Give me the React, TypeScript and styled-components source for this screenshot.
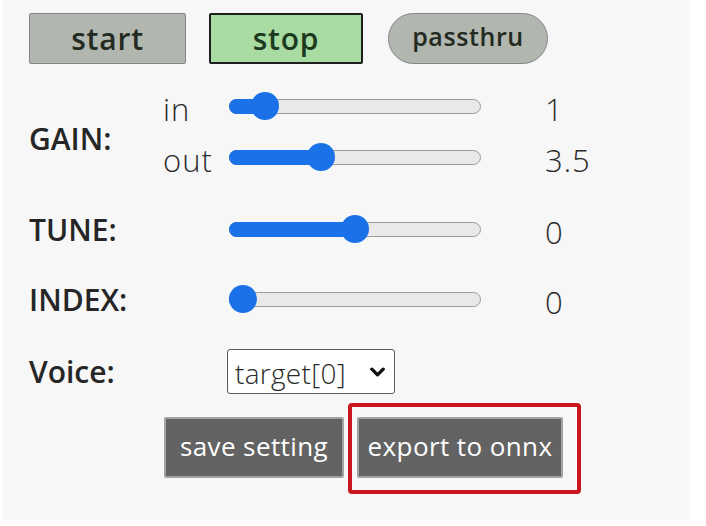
import React from 'react';
import styled, { createGlobalStyle } from 'styled-components';

const Global = createGlobalStyle`
  html, body { margin: 0; padding: 0; background: #ffffff; }
  body { font-family: "Open Sans", "Liberation Sans", sans-serif; }
`;

const Panel = styled.div`
  margin: 0 16px 0 2px;
  height: 520px;
  background: #f7f7f7;
  padding: 13px 0 0 27px;
  box-sizing: border-box;
  color: #222;
`;

const TopBar = styled.div`
  display: flex;
  align-items: flex-start;
`;

type Variant = 'idle' | 'active' | 'pill';

const ToggleButton = styled.button<{ $variant: Variant; $w: number; $ml: number }>`
  width: ${(p) => p.$w}px;
  height: 51px;
  margin-left: ${(p) => p.$ml}px;
  box-sizing: border-box;
  padding: 0;
  font-family: inherit;
  font-weight: 600;
  font-size: ${(p) => (p.$variant === 'pill' ? 25 : 30)}px;
  letter-spacing: ${(p) => (p.$variant === 'pill' ? 0.6 : 0.8)}px;
  color: ${(p) => (p.$variant === 'active' ? '#1d3a1f' : '#222a22')};
  display: flex;
  align-items: center;
  justify-content: center;
  background: ${(p) => (p.$variant === 'active' ? '#a9dca2' : '#b1b6ae')};
  border: ${(p) => (p.$variant === 'active' ? '2px solid #1e1e1e' : '1px solid #858585')};
  border-radius: ${(p) => (p.$variant === 'pill' ? '26px' : '2px')};
  padding-bottom: ${(p) => (p.$variant === 'pill' ? '6px' : '0')};
`;

const Form = styled.div`
  margin-top: 16px;
  display: flex;
  flex-direction: column;
`;

const Row = styled.div<{ $h: number; $mt?: number; $pt?: number }>`
  display: flex;
  align-items: center;
  height: ${(p) => p.$h}px;
  margin-top: ${(p) => p.$mt ?? 0}px;
  padding-top: ${(p) => p.$pt ?? 0}px;
  box-sizing: border-box;
`;

const GainGroup = styled.div`
  display: flex;
  height: 102px;
`;

const SubRows = styled.div`
  display: flex;
  flex-direction: column;
`;

const Label = styled.div<{ $w: number; $pt?: number }>`
  width: ${(p) => p.$w}px;
  flex: none;
  font-weight: 600;
  font-size: 30px;
  color: #262626;
  align-self: center;
  padding-top: ${(p) => p.$pt ?? 0}px;
`;

const SubLabel = styled.div`
  width: 66px;
  margin-left: -2px;
  font-weight: 300;
  font-size: 31px;
  letter-spacing: 1px;
  color: #2a2a2a;
  padding-top: 6px;
`;

const Value = styled.div`
  margin-left: 64px;
  font-weight: 300;
  font-size: 31px;
  letter-spacing: 1px;
  color: #2a2a2a;
  padding-top: 6px;
`;

const Track = styled.div`
  position: relative;
  flex: none;
  width: 252px;
  height: 15px;
  box-sizing: border-box;
  border: 1px solid #9c9c9c;
  border-radius: 8px;
  background: #e9e9e9;
`;

const Fill = styled.div`
  position: absolute;
  left: -1px;
  top: -1px;
  bottom: -1px;
  border-radius: 8px;
  background: #1b72e8;
`;

const Thumb = styled.div`
  position: absolute;
  top: 50%;
  width: 28px;
  height: 28px;
  margin: -14px 0 0 -14px;
  border-radius: 50%;
  background: #1b72e8;
`;

function Slider({ min, max, value }: { min: number; max: number; value: number }) {
  const frac = (value - min) / (max - min);
  const pos = 14 + frac * 224;
  return (
    <Track>
      <Fill style={{ width: pos + 1 }} />
      <Thumb style={{ left: pos - 1 }} />
    </Track>
  );
}

const SelectBox = styled.div`
  display: flex;
  align-items: center;
  gap: 24px;
  height: 45px;
  width: 168px;
  margin-left: -2px;
  box-sizing: border-box;
  padding: 0 9px 0 7px;
  border: 1px solid #5a5a5a;
  border-radius: 3px;
  background: #ffffff;
  font-weight: 300;
  font-size: 28px;
  letter-spacing: 0.3px;
  color: #2a2a2a;
`;

const SelectText = styled.span`
  padding-top: 2px;
`;

const BottomRow = styled.div`
  display: flex;
  align-items: flex-start;
  margin-left: 135px;
`;

const ActionButton = styled.button<{ $w: number; $mt?: number }>`
  width: ${(p) => p.$w}px;
  height: 61px;
  margin-top: ${(p) => p.$mt ?? 0}px;
  box-sizing: border-box;
  background: #636363;
  border: 2px solid #a3a3a3;
  border-radius: 2px;
  color: #ffffff;
  font-family: inherit;
  font-weight: 500;
  font-size: 26px;
  letter-spacing: 0.4px;
  padding: 0 0 3px;
  white-space: nowrap;
`;

const Highlight = styled.div`
  margin-left: 4px;
  padding: 10px 14px 12px 5px;
  border: 4px solid #c8161d;
  border-radius: 4px;
`;

export default function App() {
  return (
    <>
      <Global />
      <Panel>
        <TopBar>
          <ToggleButton $variant="idle" $w={157} $ml={0}>start</ToggleButton>
          <ToggleButton $variant="active" $w={154} $ml={23}>stop</ToggleButton>
          <ToggleButton $variant="pill" $w={160} $ml={25}>passthru</ToggleButton>
        </TopBar>
        <Form>
          <GainGroup>
            <Label $w={136} $pt={14}>GAIN:</Label>
            <SubRows>
              <Row $h={52}>
                <SubLabel>in</SubLabel>
                <Slider min={0} max={10} value={1} />
                <Value>1</Value>
              </Row>
              <Row $h={50}>
                <SubLabel>out</SubLabel>
                <Slider min={0} max={10} value={3.5} />
                <Value>3.5</Value>
              </Row>
            </SubRows>
          </GainGroup>
          <Row $h={70} $mt={12}>
            <Label $w={200}>TUNE:</Label>
            <Slider min={-20} max={20} value={0} />
            <Value>0</Value>
          </Row>
          <Row $h={70}>
            <Label $w={200}>INDEX:</Label>
            <Slider min={0} max={1} value={0} />
            <Value>0</Value>
          </Row>
          <Row $h={69} $pt={6}>
            <Label $w={200}>Voice:</Label>
            <SelectBox>
              <SelectText>target[0]</SelectText>
              <svg width="16" height="12" viewBox="0 0 16 12" fill="none">
                <path d="M2 3 L8 9 L14 3" stroke="#111" strokeWidth="3.6" strokeLinecap="round" strokeLinejoin="round" />
              </svg>
            </SelectBox>
          </Row>
          <BottomRow>
            <ActionButton $w={180} $mt={14}>save setting</ActionButton>
            <Highlight>
              <ActionButton $w={206}>export to onnx</ActionButton>
            </Highlight>
          </BottomRow>
        </Form>
      </Panel>
    </>
  );
}
